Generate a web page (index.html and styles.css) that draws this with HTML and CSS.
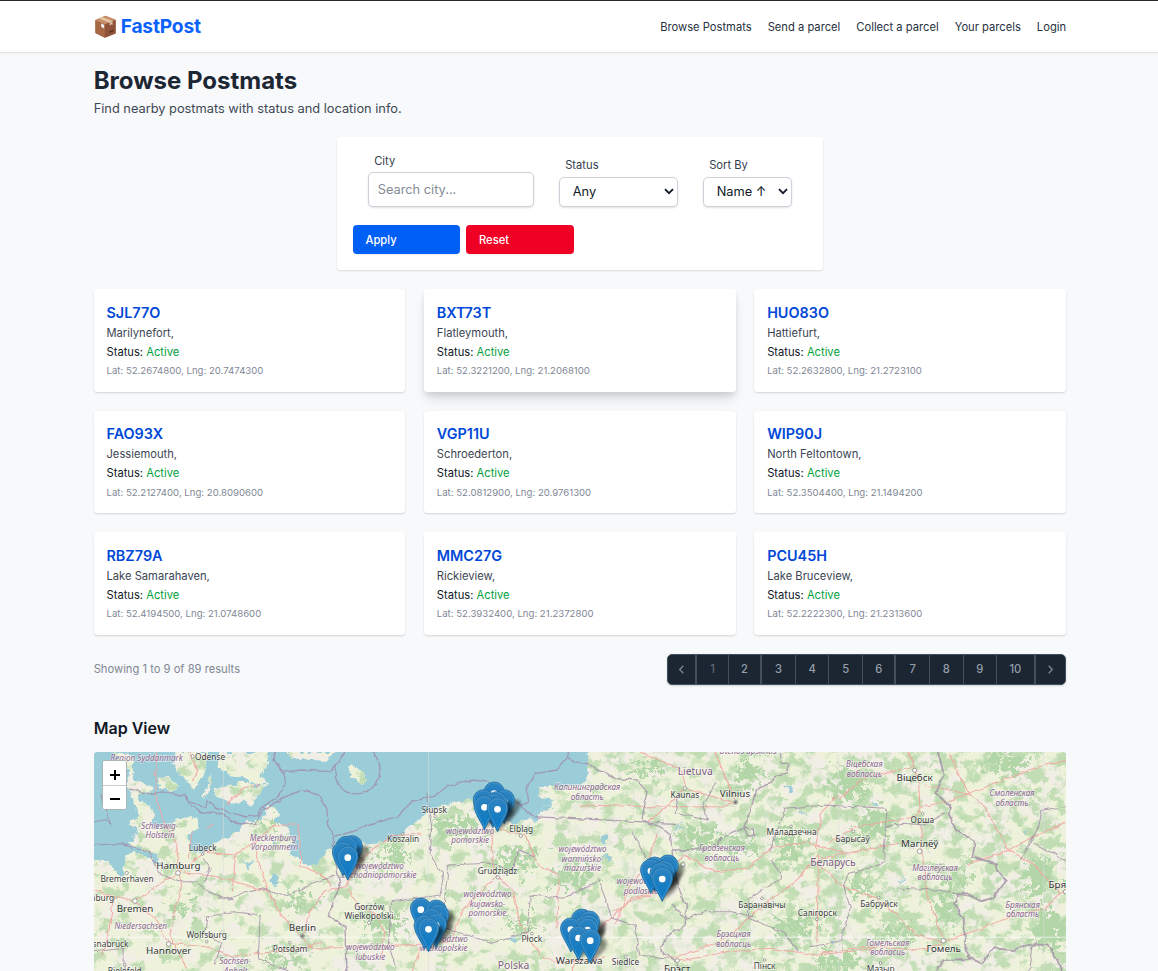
FILE: index.html
```html
<!DOCTYPE html>
<html lang="en">
<head>
<meta charset="utf-8">
<title>FastPost – Browse Postmats</title>
<link rel="stylesheet" href="styles.css">
</head>
<body>
<header class="header">
  <div class="container header-inner">
    <a class="logo"><svg class="logo-box" viewBox="0 0 62 68"><path fill="#bd7c55" d="M1 15 31 2l30 12v41L29 67 1 53z"/><path fill="#a56744" d="M1 15 29 27v40L1 53z"/><path fill="#8e5338" d="M29 27 61 14v41L29 67z"/><path fill="#c58d67" d="M1 15 31 2l30 12-32 13z"/><path fill="#e3c3a4" d="m12 10 9-4 31 12-9 5z"/><path fill="#d8bca0" d="m43 22 9-4v11l-4-1-5 4z"/><path fill="#e9eef0" d="m18 25 9 4v11l-9-5z"/><path fill="#5d3424" d="m43 48 12-5v5l-12 5z"/></svg><span>FastPost</span></a>
    <nav class="nav"><a>Browse Postmats</a><a>Send a parcel</a><a>Collect a parcel</a><a>Your parcels</a><a>Login</a></nav>
  </div>
</header>
<main class="container">
  <h1 class="title">Browse Postmats</h1>
  <p class="subtitle">Find nearby postmats with status and location info.</p>

  <form class="filter">
    <div class="fields">
      <div class="field city"><label>City</label><input type="text" placeholder="Search city..."></div>
      <div class="field status"><label>Status</label><div class="select"><select><option>Any</option></select><svg viewBox="0 0 10 7"><path d="m1 1.2 4 4 4-4"/></svg></div></div>
      <div class="field sort"><label>Sort By</label><div class="select"><select><option>Name ↑</option></select><svg viewBox="0 0 10 7"><path d="m1 1.2 4 4 4-4"/></svg></div></div>
    </div>
    <div class="actions"><button type="button" class="btn apply">Apply</button><button type="button" class="btn reset">Reset</button></div>
  </form>

  <section class="cards">
    <article class="card"><h2>SJL77O</h2><p class="place">Marilynefort,</p><p class="state">Status: <b>Active</b></p><p class="coords">Lat: 52.2674800, Lng: 20.7474300</p></article>
    <article class="card raised"><h2>BXT73T</h2><p class="place">Flatleymouth,</p><p class="state">Status: <b>Active</b></p><p class="coords">Lat: 52.3221200, Lng: 21.2068100</p></article>
    <article class="card"><h2>HUO83O</h2><p class="place">Hattiefurt,</p><p class="state">Status: <b>Active</b></p><p class="coords">Lat: 52.2632800, Lng: 21.2723100</p></article>
    <article class="card"><h2>FAO93X</h2><p class="place">Jessiemouth,</p><p class="state">Status: <b>Active</b></p><p class="coords">Lat: 52.2127400, Lng: 20.8090600</p></article>
    <article class="card"><h2>VGP11U</h2><p class="place">Schroederton,</p><p class="state">Status: <b>Active</b></p><p class="coords">Lat: 52.0812900, Lng: 20.9761300</p></article>
    <article class="card"><h2>WIP90J</h2><p class="place">North Feltontown,</p><p class="state">Status: <b>Active</b></p><p class="coords">Lat: 52.3504400, Lng: 21.1494200</p></article>
    <article class="card"><h2>RBZ79A</h2><p class="place">Lake Samarahaven,</p><p class="state">Status: <b>Active</b></p><p class="coords">Lat: 52.4194500, Lng: 21.0748600</p></article>
    <article class="card"><h2>MMC27G</h2><p class="place">Rickieview,</p><p class="state">Status: <b>Active</b></p><p class="coords">Lat: 52.3932400, Lng: 21.2372800</p></article>
    <article class="card"><h2>PCU45H</h2><p class="place">Lake Bruceview,</p><p class="state">Status: <b>Active</b></p><p class="coords">Lat: 52.2222300, Lng: 21.2313600</p></article>
  </section>

  <div class="results">
    <p>Showing 1 to 9 of 89 results</p>
    <nav class="pages"><span class="arrow thick"><svg viewBox="0 0 6 8"><path d="M4.6 .7 1.4 4l3.2 3.3"/></svg></span><span class="current">1</span><span class="thick">2</span><span>3</span><span>4</span><span>5</span><span class="thick">6</span><span>7</span><span>8</span><span>9</span><span class="wide thick">10</span><span class="arrow"><svg viewBox="0 0 6 8"><path d="M1.4 .7l3.2 3.3-3.2 3.3"/></svg></span></nav>
  </div>

  <h2 class="map-title">Map View</h2>
  <div class="map">
    <svg class="map-canvas" viewBox="27 21 2916 657" preserveAspectRatio="none">
      <defs>
        <clipPath id="land">
          <path d="M82 21l25 22 25 34-4 50 22 52 12 30-32 28 34 28-36 32 48 20 38 14 26 42-36-30-38-22-44 10-4 36-8 24-30-16-8-26-52-4V690H2960V0H1512L1505 60l2 55-45 8h-95l-2 36 50 6-38 20-42 32-50 22-34-22-44-48-52-8-110 26-50 42-60 50-60 14-90 6-60 20-30 42-30 0-30-28-24-4 8-38-10-40-44-24 14-22-10-22-24 8-16 38-48-4-20 36-76 36-36 34-34-16-10-38 20-22 20-24-26-16-42 6-16 24-36 2-28-8 10-32-12-28-36-16 2-18 48-8-18-16-44-22-6-40 2-30z"/>
          <path d="M262 52l16-31h85l4 40-18 42-30 9-36-22zM382 80l-6 30-14 48-8-4 14-44zM403 21l-4 40 38 30 56 8 14 28 46-10-30-26 26-30-4-40zM388 133l50-12 45-11 56 10-42 70-24-24-30 14-50-30zM598 21l20 20 62 4 40 2 34-26zM213 100l34-6 38 36-26 10-34-14zM800 56l12 10 30 24-6 24-44-20zM310 95l30 18-4 22-26-18z"/>
        </clipPath>
        <filter id="woods" x="0" y="0" width="100%" height="100%" color-interpolation-filters="sRGB"><feTurbulence type="fractalNoise" baseFrequency=".022 .026" numOctaves="5" seed="8"/><feColorMatrix values="0 0 0 0 .74  0 0 0 0 .86  0 0 0 0 .69  7 0 0 0 -3.7"/></filter>
        <filter id="meadow" x="0" y="0" width="100%" height="100%" color-interpolation-filters="sRGB"><feTurbulence type="fractalNoise" baseFrequency=".013" numOctaves="4" seed="21"/><feColorMatrix values="0 0 0 0 .935  0 0 0 0 .95  0 0 0 0 .855  0 7 0 0 -2.8"/></filter>
        <filter id="ragged" x="-10%" y="-10%" width="120%" height="120%" color-interpolation-filters="sRGB"><feTurbulence type="fractalNoise" baseFrequency=".05" numOctaves="5" seed="4"/><feDisplacementMap in="SourceGraphic" scale="150" xChannelSelector="R" yChannelSelector="G"/></filter>
        <filter id="wiggle" x="-5%" y="-5%" width="110%" height="110%" color-interpolation-filters="sRGB"><feTurbulence type="fractalNoise" baseFrequency=".05" numOctaves="3" seed="2"/><feDisplacementMap in="SourceGraphic" scale="24" xChannelSelector="R" yChannelSelector="G"/></filter>
        <filter id="gentle" x="-5%" y="-5%" width="110%" height="110%" color-interpolation-filters="sRGB"><feTurbulence type="fractalNoise" baseFrequency=".04" numOctaves="2" seed="2"/><feDisplacementMap in="SourceGraphic" scale="13" xChannelSelector="R" yChannelSelector="G"/></filter>
        <filter id="soft" x="-50%" y="-50%" width="200%" height="200%"><feGaussianBlur stdDeviation="5"/></filter>
        <linearGradient id="east"><stop offset=".45" stop-color="#000"/><stop offset=".72" stop-color="#fff"/></linearGradient>
        <mask id="eastMask" maskUnits="userSpaceOnUse" x="0" y="0" width="2960" height="690"><rect width="2960" height="690" fill="url(#east)"/></mask>
        <linearGradient id="pinFill" x2="0" y2="1"><stop stop-color="#2e83c0"/><stop offset="1" stop-color="#0678c4"/></linearGradient>
        <g id="pin">
          <path d="M-2 0 14-66q28-14 36 2 2 16-18 38z" fill="#111" opacity=".42" filter="url(#soft)"/>
          <path d="M0 0C-9-22-31-49-31-71a31 31 0 0 1 62 0C31-49 9-22 0 0z" fill="url(#pinFill)" stroke="#2470a5" stroke-width="2.5"/>
          <path d="M0-8C-9-29-28-52-28-71a28 28 0 0 1 56 0C28-52 9-29 0-8z" fill="none" stroke="#4f9dd0" stroke-width="2"/>
          <circle cy="-67" r="10" fill="#fff"/>
        </g>
      </defs>
      <rect width="2960" height="690" fill="#9bcdd9"/>
      <g filter="url(#wiggle)">
      <g clip-path="url(#land)">
        <rect width="2960" height="690" fill="#f1eee5"/>
        <rect width="2960" height="690" filter="url(#meadow)"/>
        <rect width="2960" height="690" filter="url(#woods)" opacity=".9"/>
        <g mask="url(#eastMask)"><rect width="2960" height="690" filter="url(#woods)" transform="translate(2960 690) rotate(180)" opacity=".9"/></g>
        <g filter="url(#ragged)" fill="#b3d6a9">
          <ellipse cx="290" cy="490" rx="32" ry="20"/><ellipse cx="560" cy="235" rx="25" ry="12"/><ellipse cx="640" cy="470" rx="42" ry="22"/><ellipse cx="600" cy="640" rx="60" ry="20"/><ellipse cx="1110" cy="245" rx="75" ry="30"/><ellipse cx="920" cy="330" rx="70" ry="16"/><ellipse cx="1290" cy="345" rx="55" ry="32"/><ellipse cx="900" cy="530" rx="65" ry="26"/><ellipse cx="1460" cy="390" rx="52" ry="34"/><ellipse cx="1310" cy="530" rx="45" ry="16"/><ellipse cx="1850" cy="280" rx="62" ry="30"/><ellipse cx="1680" cy="75" rx="50" ry="18"/><ellipse cx="1970" cy="300" rx="50" ry="25"/><ellipse cx="2110" cy="300" rx="28" ry="60"/><ellipse cx="2130" cy="545" rx="70" ry="26"/><ellipse cx="1990" cy="85" rx="40" ry="30"/><ellipse cx="2290" cy="120" rx="60" ry="45"/><ellipse cx="2370" cy="235" rx="50" ry="40"/><ellipse cx="2620" cy="405" rx="50" ry="24"/><ellipse cx="2580" cy="490" rx="24" ry="48"/><ellipse cx="2765" cy="55" rx="65" ry="32"/><ellipse cx="2860" cy="395" rx="42" ry="55"/><ellipse cx="2895" cy="550" rx="50" ry="55"/><ellipse cx="2330" cy="420" rx="42" ry="20"/><ellipse cx="2260" cy="650" rx="70" ry="28"/><ellipse cx="2450" cy="565" rx="60" ry="20"/>
        </g>
        <g fill="#9bcdd9" filter="url(#wiggle)"><path d="M560 388l26 18-10 12-22-18zM1270 575l38 10-20 8zM1545 285l14-18 10 12-12 28zM1558 330l24 6-16 18zM1770 240l14-4 8 12-18 4zM2102 130l24 6-10 14zM2135 208l26-4-10 10zM2362 168l8 0 4 22-10-6zM2812 250l16 12 2 12zM2450 380l5 2 0 26-6-4zM485 340l10 12-4 24-8-20zM1350 190l46-22 8 8-26 20-38 38-12-6zM2225 585l26 8-10 8zM560 290l8-8 6 10-10 8z"/></g>
      </g>
      </g>
      <g filter="url(#gentle)">
      <g fill="none" stroke="#f3a3a0" stroke-width="3.2" opacity=".88" stroke-linejoin="round">
        <path d="M215 21l-5 125 25 80 40 70 5 85 10 40-20 70-15 80 50 100M280 382l110 12 160 45 40 70 30 35 30 30M280 382l80-60 90 8 60-40 60-50 70 0M452 325l-10 110M510 320l20 60 20 60M640 240l5 60 2 60 70 35 20 30M27 435l60 20 60 15 60 45 45 80 110 10 80 30 210-25 60-20M150 470l70-50 60-38M85 460l-15 110-20 60M652 572l20-70 50-65 60-12M652 580l30 28 90 0M315 21l20 55-10 30M425 178l50-50 50-10M310 340l10-80M365 250l20-10"/>
        <path d="M780 422l60-90 80-60 85-5M788 430l30 50 60 30 20 60-10 80M780 607l240-10 80-10 30-90 100-100M1220 250l5 130 60 60 20 100 60 90M1230 250l90 20 40 90 60 30-5 160M1010 600l-30 80M1460 678l30-80 90-80 60-60 90-20M1370 635l60 20 130-20"/>
        <path d="M1485 180l200 5 220 0 50-10M1665 21l120 50 20 60 145 45M1890 21l60 150M1715 270l-30 90-50 60-45 120M1690 230l60-50 50-50M1730 390l70-60 90 50 90-10 80-60 100-20 120 35M2200 330l-60 70-140 110-60 60-110 50-80 20M1775 650l150-30 130-10 140 20 180-20M2190 310l20-110 50-50M2200 330l-5 260M1585 500l70-40 80-20"/>
        <path d="M2205 340l180-35 80-15M2260 165l80-70 140-30M2230 295l80-50 180-30 20-30 90-20 260-100 90-20M2470 21l30 90 10 210 15 130 50 130M2205 360l60 60 110 40 60 50 55 60 80 20M2570 590l120-40 100-40 90-20 60-60M2590 21l50 110 60 60 70 125 70 40 90 90M2205 625l130-20 170 10 65-20M2640 360l135-45 70-40 95-40M2520 120l140 30"/>
      </g>
      <g fill="none" stroke="#a08ca6" stroke-width="4" opacity=".78" stroke-linejoin="round">
        <path d="M400 455l30 10 50-25 50-10 70 20 50-15 30-20 80-25M210 345l10 40 60 25 50 0 50 35 65 20M365 515l-5 50 50 30-20 60M365 515l80-15 80 10-5 130 90 38M360 410l15-40-20-30M27 620l90-10 0 68" stroke-width="3"/>
        <path d="M1025 140l15 90-5 100 40 60-10 60-145 20-10 130 20 60M1080 450l10-90 120-5 70 20 20-60 50 20M1080 450l-10 100 60 15 90 30 110-35 5-110 100 10 100-50M1540 400l20 60 20 60 70 20 10 90 90 10M1640 260l20 40 50 80 45 0M1760 480l40 40 60-20 80 0 60 15M1895 115l-45 70 20 40-100-20 10-60M2055 320l20-60 25-70 120-10 95 5 90 5-10 160-45 20-60 15-15 35 20 70-30 100-90 15M2060 340l30 60-100 60 0 60 100 40 50 60M2400 245l50-10 70 5 65-40M2440 430l120 5 100 20M2805 345l55-100 10-50 70-10M2845 295l60 30 50 30M2840 600l-10 78" stroke-width="3.2"/>
        <path d="M27 232l35-8 15 14-30-90M27 300l80-4 90 28 15 40M80 297l45 0 20 22" stroke-width="3"/>
        <path d="M130 132l75 16 30-13 35 15h32M302 145l10 25 50 18 4-22 30 25 85 25 35-4 10-22 60-40 15-40-5-25-30-40 5-24M302 152l10 25 40 28 33-5 50 20 30 20 45-5 20-35 60-40 60-25 50 15 25 40 5 50 15 40 0 40 20 100-25 60-8 35 48 30 2 130M565 21l5 30 30 29 50-5 88 5 42-59M780 21q-60 70 0 118 46 22 92-20 30-54-10-98M745 275l60-20 130-40 45-45 65-15 40-30 80-20 70 10 70 65 35 35 430 20M1310 185l20-15-5-50 30-35 60-10 32-37 3-17M1447 38l33 17 35 5 20 15 30 10 20 15 70 5 30 35-15 85 25 10 30 10 30 25 5 45h65l70-10 10-25 70-30 25-65 10-50 45-20 20-25 30-5 10-30-25 0-5-29M1976 245l28 10 2 15-20 5zM1760 315l10 75 15 50 18 40-3 60-55 35-22 40 52 35 10 28"/>
        <path d="M2560 21l15 69-25 55 45 35-5 30 25 45 55 35-10 48 75 17v25l30 25-45 55-35 10-40-25-30 5-8 28 28 42 5 90 15 30 35 15 35-45 60 5 50-17 50 2 30 40 15 38M2555 678l20-33 80-3" stroke-width="5.5"/>
      </g>
      </g>
      <g stroke="#fff" fill="none" opacity=".65"><path d="M27 577H2943" stroke-width="3"/><path d="M415 21V678M1030 21V678M1645 21V678M2260 21V678M2875 21V678" stroke="#ddd" stroke-width="2.5"/></g>
      <g class="dots"><circle cx="323" cy="34" r="5"/><circle cx="125" cy="384" r="5"/><circle cx="353" cy="327" r="4"/><circle cx="279" cy="384" r="7"/><circle cx="150" cy="468" r="7"/><circle cx="85" cy="460" r="4"/><circle cx="251" cy="597" r="7"/><circle cx="365" cy="590" r="4"/><circle cx="119" cy="659" r="4"/><circle cx="652" cy="573" r="6"/><circle cx="614" cy="593" r="4"/><circle cx="953" cy="267" r="4"/><circle cx="1050" cy="214" r="4"/><circle cx="1307" cy="272" r="5"/><circle cx="1238" cy="397" r="5"/><circle cx="852" cy="533" r="5"/><circle cx="1340" cy="566" r="4"/><circle cx="1799" cy="130" r="5"/><circle cx="1951" cy="172" r="6"/><circle cx="1793" cy="359" r="6"/><circle cx="2117" cy="244" r="4"/><circle cx="2030" cy="460" r="4"/><circle cx="2195" cy="523" r="4"/><circle cx="1776" cy="647" r="6"/><circle cx="1621" cy="635" r="4"/><circle cx="2038" cy="645" r="4"/><circle cx="2488" cy="76" r="6"/><circle cx="2512" cy="206" r="4"/><circle cx="2304" cy="259" r="4"/><circle cx="2503" cy="319" r="7"/><circle cx="2380" cy="458" r="4"/><circle cx="2574" cy="587" r="7"/><circle cx="2386" cy="654" r="4"/><circle cx="2940" cy="440" r="6"/><circle class="core" cx="652" cy="573" r="3"/><circle class="core" cx="1951" cy="172" r="3"/></g>
      <g class="region">
        <text x="185" y="48">Region Syddanmark</text><text x="224" y="251">Schleswig-</text><text x="225" y="279">Holstein</text><text x="568" y="287">Mecklenburg-</text><text x="568" y="316">Vorpommern</text><text x="167" y="551">Niedersachsen</text><text x="450" y="658">Sachsen-</text><text x="452" y="686">Anhalt</text>
        <text x="1155" y="267">województwo</text><text x="1155" y="295">pomorskie</text><text x="884" y="371">województwo</text><text x="882" y="399">zachodniopomorskie</text><text x="1207" y="457">województwo</text><text x="1207" y="485">kujawsko-</text><text x="1207" y="514">pomorskie</text><text x="1076" y="590">województwo</text><text x="1076" y="618">wielkopolskie</text><text x="856" y="616">województwo</text><text x="856" y="644">lubuskie</text><text x="1492" y="321">województwo</text><text x="1492" y="350">warmińsko-</text><text x="1492" y="378">mazurskie</text><text x="1506" y="136">Калининградская</text><text x="1506" y="165">область</text>
        <text x="1667" y="417">województwo</text><text x="1667" y="446">podlaskie</text><text x="1910" y="319">Гродзенская</text><text x="1910" y="347">вобласць</text><text x="1945" y="577">Брэсцкая</text><text x="1945" y="606">вобласць</text><text x="1988" y="28">Utenos apskritis</text>
        <text x="2337" y="67">Віцебская</text><text x="2337" y="96">вобласць</text><text x="2780" y="154">Смоленская</text><text x="2780" y="182">область</text><text x="2549" y="377">Магілёўская</text><text x="2549" y="404">вобласць</text><text x="2812" y="489">Брянская</text><text x="2812" y="517">область</text><text x="2407" y="602">Гомельская</text><text x="2407" y="630">вобласць</text>
      </g>
      <g class="town">
        <text x="375" y="45">Odense</text><text x="353" y="317">Lübeck</text><text x="126" y="411">Bremerhaven</text><text x="24" y="468">Oldenburg</text><text x="365" y="579">Wolfsburg</text><text x="67" y="606">Osnabrück</text><text x="119" y="686">Bielefeld</text><text x="615" y="620">Potsdam</text><text x="954" y="291">Koszalin</text><text x="1047" y="204">Słupsk</text><text x="1308" y="262">Elbląg</text><text x="1237" y="386">Grudziądz</text><text x="852" y="495">Gorzów</text><text x="852" y="523">Wielkopolski</text><text x="1340" y="592">Płock</text><text x="1799" y="158">Kaunas</text><text x="2119" y="270">Маладзечна</text><text x="2030" y="488">Баранавічы</text><text x="2196" y="514">Салігорск</text><text x="1621" y="661">Siedlce</text><text x="2038" y="671">Пінск</text><text x="2511" y="233">Орша</text><text x="2302" y="292">Барысаў</text><text x="2381" y="486">Бабруйск</text><text x="2386" y="682">Мазыр</text>
      </g>
      <g class="city">
        <text x="280" y="371">Hamburg</text><text x="150" y="502">Bremen</text><text x="251" y="628">Hannover</text><text x="652" y="557">Berlin</text><text x="1482" y="657">Warszawa</text><text x="1949" y="157">Vilnius</text><text x="1776" y="680">Брэст</text><text x="2488" y="109">Віцебск</text><text x="2503" y="306">Магілёў</text><text x="2575" y="620">Гомель</text><text x="2940" y="428">Брянск</text>
        <text class="country" x="1285" y="671">Polska</text><text class="country" x="1830" y="90">Lietuva</text><text class="country" x="2243" y="364">Беларусь</text>
      </g>
      <g>
        <use href="#pin" x="1227" y="213"/><use href="#pin" x="1195" y="236"/><use href="#pin" x="1257" y="236"/><use href="#pin" x="1234" y="242"/><use href="#pin" x="1223" y="248"/><use href="#pin" x="1198" y="254"/><use href="#pin" x="1237" y="260"/>
        <use href="#pin" x="801" y="374"/><use href="#pin" x="784" y="376"/><use href="#pin" x="773" y="392"/><use href="#pin" x="788" y="405"/>
        <use href="#pin" x="1007" y="561"/><use href="#pin" x="1053" y="567"/><use href="#pin" x="1060" y="580"/><use href="#pin" x="1039" y="592"/><use href="#pin" x="1053" y="608"/><use href="#pin" x="1018" y="612"/><use href="#pin" x="1030" y="620"/>
        <use href="#pin" x="1490" y="594"/><use href="#pin" x="1512" y="600"/><use href="#pin" x="1510" y="612"/><use href="#pin" x="1457" y="621"/><use href="#pin" x="1507" y="622"/><use href="#pin" x="1480" y="646"/><use href="#pin" x="1515" y="654"/>
        <use href="#pin" x="1748" y="432"/><use href="#pin" x="1708" y="438"/><use href="#pin" x="1697" y="445"/><use href="#pin" x="1737" y="449"/><use href="#pin" x="1725" y="455"/><use href="#pin" x="1731" y="469"/>
      </g>
    </svg>
    <div class="zoom"><button type="button"><svg viewBox="0 0 12 12"><path d="M1 6h10M6 1v10"/></svg></button><button type="button"><svg viewBox="0 0 12 12"><path d="M1 6h10"/></svg></button></div>
  </div>
</main>
</body>
</html>
```
FILE: styles.css
```css
* { box-sizing: border-box; margin: 0; padding: 0; }
html, body { height: 971px; overflow: hidden; }
body { background: #f8f9fb; color: #111827; font: 11.2px/17px Inter, "Liberation Sans", sans-serif; }
.container { width: 972.4px; margin: 0 auto; position: relative; left: .9px; }
.header { height: 53px; background: #fff; border-top: 1px solid #29292c; border-bottom: 1px solid #e2e4e6; box-shadow: 0 1px 2px rgba(0,0,0,.04); }
.header-inner { display: flex; align-items: center; justify-content: space-between; height: 51px; }
.logo { display: flex; align-items: center; gap: 5px; color: #0a62fa; font-size: 19.2px; font-weight: 700; line-height: 26px; letter-spacing: -.2px; }
.logo span { position: relative; top: -.5px; }
.logo-box { width: 21px; height: 23px; margin-left: 1px; }
.nav { display: flex; gap: 16px; color: #27313f; padding-top: 1px; }
.title { font-size: 24px; line-height: 30px; padding-top: 12.5px; height: 43px; color: #1c2733; font-weight: 700; }
.subtitle { margin-top: 3px; font-size: 12.8px; line-height: 19px; color: #3d4855; }
.filter { width: 486px; height: 133px; margin: 19px 0 0 243px; background: #fff; border-radius: 3.5px; box-shadow: 0 1px 2px rgba(0,0,0,.13); padding: 16px; }
.fields { display: flex; align-items: flex-end; gap: 25px; height: 53.5px; padding-left: 15px; }
.field label { display: block; line-height: 15px; color: #333d4b; padding-left: 6.5px; }
.city { width: 166px; }
.status { width: 119px; }
.sort { width: 89px; }
.city input { width: 100%; height: 34.5px; margin-top: 3px; display: block; border: 1px solid #cdd1d9; border-radius: 5px; padding: 0 9px; font: 12.8px Inter, sans-serif; box-shadow: 0 1px 2px rgba(0,0,0,.12); }
.city input::placeholder { color: #858b95; }
.select { position: relative; height: 29.5px; margin-top: 4px; }
.select select { display: block; appearance: none; width: 100%; height: 29.5px; background: #fff; border: 1px solid #cdd1d9; border-radius: 5px; padding: 0 13px; color: #101828; font: 12.8px Inter, sans-serif; box-shadow: 0 1px 2px rgba(0,0,0,.12); }
.select svg { position: absolute; right: 4px; top: 11px; width: 10px; height: 7px; fill: none; stroke: #111827; stroke-width: 1.8; }
.actions { display: flex; gap: 6px; margin-top: 18.5px; }
.btn { width: 107.5px; height: 29px; border: 0; border-radius: 4px; padding-left: 12.8px; text-align: left; color: #fff; font: 500 11.2px Inter, sans-serif; box-shadow: 0 1px 2px rgba(0,0,0,.08); }
.apply { background: #0060f5; }
.reset { background: #f00024; }
.cards { display: grid; grid-template-columns: repeat(3, 1fr); gap: 19px 18.6px; margin-top: 19px; }
.card { height: 102.6px; background: #fff; border-radius: 3.5px; padding: 13.6px 12.8px; box-shadow: 0 1px 2px rgba(0,0,0,.15); }
.card.raised { box-shadow: 0 8px 12px -2px rgba(0,0,0,.13), 0 3px 5px rgba(0,0,0,.08); }
.card h2 { font-size: 14.4px; line-height: 20px; font-weight: 600; color: #0048d8; }
.place { line-height: 20px; color: #3b4654; }
.state { line-height: 19px; }
.state b { font-weight: 400; color: #009f3c; }
.coords { font-size: 9.6px; line-height: 14px; margin-top: 2.5px; color: #7f8896; }
.results { display: flex; justify-content: space-between; align-items: center; margin-top: 19px; color: #7f8894; }
.pages { display: flex; height: 31px; background: #1c2632; border: 1px solid #41505b; border-radius: 5px; overflow: hidden; box-shadow: 0 1px 2px rgba(0,0,0,.15); }
.pages span { width: 33.55px; border-right: 1px solid #41505b; display: flex; align-items: center; justify-content: center; font-weight: 500; color: #949da9; }
.pages .arrow { width: 29.5px; }
.pages .current { width: 31.5px; color: #5b6672; }
.pages .wide { width: 38.5px; }
.pages .thick { border-right-width: 2px; }
.pages span:last-child { border: 0; }
.pages svg { width: 7px; height: 9px; fill: none; stroke: #7b8590; stroke-width: 1.2; }
.map-title { margin-top: 32.5px; font-size: 16px; line-height: 22px; font-weight: 600; color: #111827; }
.map { position: relative; margin-top: 12.5px; height: 219px; border-radius: 3.5px 3.5px 0 0; overflow: hidden; background: #ddd; }
.map-canvas { display: block; width: 100%; height: 219px; }
.map text { font-family: "Noto Sans", sans-serif; text-anchor: middle; paint-order: stroke; stroke: rgba(255,255,255,.6); stroke-width: 4px; }
.region { font-style: italic; font-size: 24.3px; fill: #89638d; }
.town { font-size: 25px; fill: #3d3d3d; }
.city text { font-size: 29.5px; fill: #333; }
.city text.country { font-size: 31px; fill: #7d5b82; }
.dots circle { fill: #fff; stroke: #686868; stroke-width: 1.8; }
.dots .core { fill: #555; }
.zoom { position: absolute; left: 8.5px; top: 8.5px; width: 25px; border: 1px solid #abb4b7; border-radius: 3px; overflow: hidden; background: #fff; }
.zoom button { display: flex; width: 23px; height: 23.5px; align-items: center; justify-content: center; background: #fff; border: 0; padding-top: 3px; }
.zoom button + button { border-top: 1px solid #ccc; height: 24px; }
.zoom svg { width: 12px; height: 12px; stroke: #000; stroke-width: 2; }
```
